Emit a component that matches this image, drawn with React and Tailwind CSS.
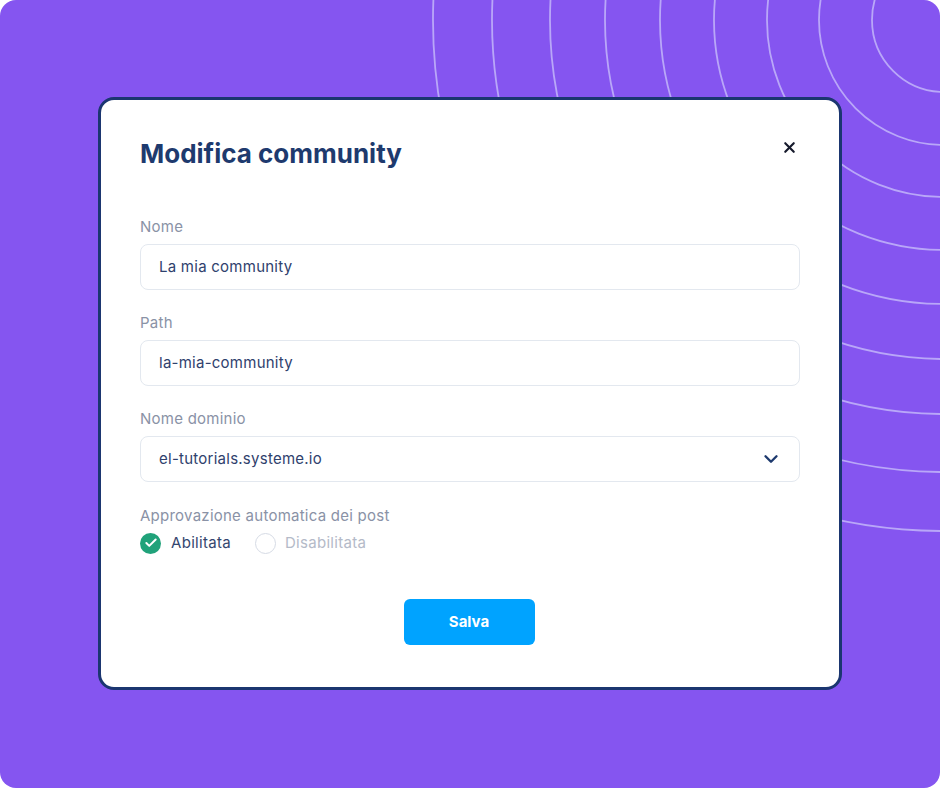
import { Check, ChevronDown, X } from "lucide-react"

const rings = [72, 125, 177, 230, 284, 339, 394, 452, 511]

function Field({ label, value, select }) {
  return (
    <div className="flex flex-col gap-[7px]">
      <label className="text-[15px] leading-5 tracking-[0.25px] text-[#8a92a6]">{label}</label>
      <div className="h-[46px] rounded-lg border-[1.5px] border-[#e3e8ef] flex items-center justify-between pl-[18px] pr-[17px]">
        <span className="text-[15px] tracking-[0.25px] text-[#2f416d]">{value}</span>
        {select && <ChevronDown size={22} strokeWidth={2.6} className="text-[#1e3a6e]" />}
      </div>
    </div>
  )
}

export default function App() {
  return (
    <div className="w-[940px] h-[788px] bg-white" style={{ fontFamily: "Inter, 'Noto Sans', sans-serif" }}>
      <div className="relative w-full h-full rounded-2xl bg-[#8555f0] overflow-hidden flex items-center justify-center">
        <svg className="absolute inset-0" width="940" height="788" fill="none">
          {rings.map(r => (
            <circle key={r} cx="944" cy="20" r={r} stroke="#b9a7f8" strokeWidth="1.8" />
          ))}
        </svg>

        <div className="relative w-[744px] h-[593px] -mt-[1px] bg-white border-[3px] border-[#1b3670] rounded-2xl px-[39px] pt-[38px]">
          <div className="flex items-start justify-between">
            <h1 className="text-[26px] leading-8 font-bold text-[#1e3a6e]">
              Modifica community
            </h1>
            <X size={17} strokeWidth={3} className="text-[#161a2c] mt-[1px] mr-[2px]" />
          </div>

          <div className="mt-[47px] flex flex-col gap-[23px]">
            <Field label="Nome" value="La mia community" />
            <Field label="Path" value="la-mia-community" />
            <Field label="Nome dominio" value="el-tutorials.systeme.io" select />
          </div>

          <div className="mt-[24px] flex flex-col gap-[7px]">
            <span className="text-[15px] leading-5 tracking-[0.25px] text-[#8a92a6]">Approvazione automatica dei post</span>
            <div className="flex items-center h-5 tracking-[0.3px]">
              <span className="w-[21px] h-[21px] rounded-full bg-[#20a27a] flex items-center justify-center">
                <Check size={14} strokeWidth={3.4} className="text-white" />
              </span>
              <span className="ml-[10px] text-[15px] text-[#34466e]">Abilitata</span>
              <span className="ml-[24px] w-[21px] h-[21px] rounded-full border-[1.5px] border-[#d6dbe5]" />
              <span className="ml-[9px] text-[15px] text-[#b4bac8]">Disabilitata</span>
            </div>
          </div>

          <div className="mt-[46px] flex justify-center">
            <button className="w-[131px] h-[46px] -ml-[2px] rounded-md bg-[#00a3ff] text-white text-[15px] font-bold">
              Salva
            </button>
          </div>
        </div>
      </div>
    </div>
  )
}
